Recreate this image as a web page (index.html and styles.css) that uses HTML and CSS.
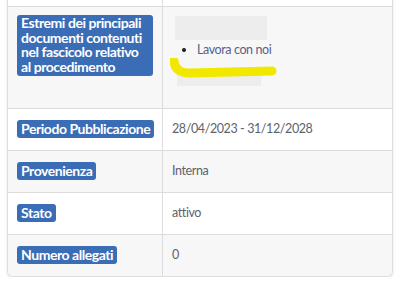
FILE: index.html
```html
<!DOCTYPE html>
<html lang="it">
<head>
<meta charset="utf-8">
<link rel="stylesheet" href="styles.css">
</head>
<body>
<div class="card">
  <div class="row row-prev">
    <div class="label"></div>
    <div class="value"></div>
  </div>
  <div class="row row-alt">
    <div class="label"><span class="badge badge-multi">Estremi dei principali documenti contenuti nel fascicolo relativo al procedimento</span></div>
    <div class="value value-docs">
      <div class="redact redact-a"></div>
      <ul class="doc-list"><li><a class="doc-link" href="#">Lavora con noi</a></li></ul>
      <div class="redact redact-b"></div>
      <svg class="marker" width="120" height="30" viewBox="0 0 120 30"><path d="M4 3 Q5 15 20 15 L102 13" fill="none" stroke="#f1e800" stroke-width="9" stroke-linecap="round" stroke-linejoin="round"/></svg>
    </div>
  </div>
  <div class="row">
    <div class="label"><span class="badge">Periodo Pubblicazione</span></div>
    <div class="value">28/04/2023 - 31/12/2028</div>
  </div>
  <div class="row row-alt">
    <div class="label"><span class="badge">Provenienza</span></div>
    <div class="value">Interna</div>
  </div>
  <div class="row">
    <div class="label"><span class="badge">Stato</span></div>
    <div class="value">attivo</div>
  </div>
  <div class="row row-alt row-last">
    <div class="label"><span class="badge">Numero allegati</span></div>
    <div class="value">0</div>
  </div>
</div>
</body>
</html>
```

FILE: styles.css
```css
html, body {
  margin: 0;
  padding: 0;
  background: #ffffff;
}
body {
  font-family: "Lato", "Open Sans", sans-serif;
  overflow: hidden;
}
.card {
  margin: -40px 0 0 7px;
  width: 384px;
  border: 1px solid #dedede;
  border-top: none;
  border-radius: 0 0 6px 6px;
  box-shadow: 0 1px 3px rgba(0,0,0,0.12);
  overflow: hidden;
}
.row {
  display: grid;
  grid-template-columns: 155px 1fr;
  border-top: 1px solid #dcdcdc;
  background: #ffffff;
}
.row-prev {
  border-top: none;
  height: 46px;
}
.row-alt {
  background: #f7f7f7;
}
.label {
  padding: 11px 9px 12px 9px;
  border-right: 1px solid #dcdcdc;
  display: flex;
  align-items: flex-start;
}
.value {
  padding: 11px 9px 12px 9px;
  font-size: 12.5px;
  letter-spacing: -0.4px;
  line-height: 18px;
  color: #5d636b;
  position: relative;
}
.badge {
  display: inline-block;
  background: #3a6db5;
  color: #ffffff;
  font-weight: 700;
  font-size: 14px;
  letter-spacing: -0.45px;
  line-height: 18px;
  padding: 0 4px;
  border-radius: 3px;
  white-space: nowrap;
}
.badge-multi {
  white-space: normal;
  line-height: 14.5px;
  padding: 1px 4px 2px 4px;
  width: 132px;
  margin-top: -3px;
}
.value-docs {
  padding: 9px 12px 21px 12px;
  height: 71px;
}
.redact {
  background: #ededed;
  filter: blur(0.6px);
}
.redact-a {
  width: 92px;
  height: 24px;
}
.redact-b {
  width: 84px;
  height: 14px;
  margin: 13px 0 0 2px;
}
.doc-list {
  margin: 1px 0 0 0;
  padding-left: 22px;
  color: #1a1a1a;
}
.doc-link {
  color: #56618a;
  text-decoration: none;
}
.marker {
  position: absolute;
  left: 7px;
  top: 51px;
}
```
